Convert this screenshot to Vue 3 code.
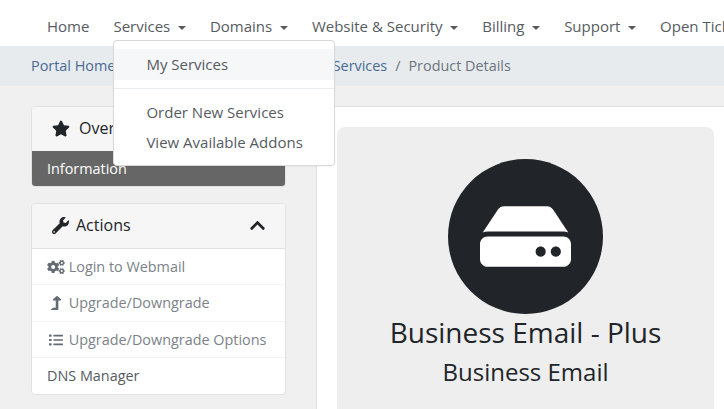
<script setup>
const 菜单 = [
  { 名称: 'Home', 下拉: false },
  { 名称: 'Services', 下拉: true },
  { 名称: 'Domains', 下拉: true },
  { 名称: 'Website & Security', 下拉: true },
  { 名称: 'Billing', 下拉: true },
  { 名称: 'Support', 下拉: true },
  { 名称: 'Open Ticket', 下拉: false }
]
</script>

<template>
  <div class="page">
    <!-- 顶部导航 -->
    <nav class="navbar">
      <a v-for="项 in 菜单" :key="项.名称" class="nav-item">
        {{ 项.名称 }}<span v-if="项.下拉" class="caret"></span>
        <div v-if="项.名称 === 'Services'" class="dropdown">
          <div class="dropdown-item active">My Services</div>
          <div class="divider"></div>
          <div class="dropdown-item">Order New Services</div>
          <div class="dropdown-item">View Available Addons</div>
        </div>
      </a>
    </nav>

    <!-- 面包屑 -->
    <div class="breadcrumb">
      <a>Portal Home</a><span class="sep">/</span>
      <a>Client Area</a><span class="sep">/</span>
      <a>My Products &amp; Services</a><span class="sep">/</span>
      <span class="current">Product Details</span>
    </div>

    <div class="content">
      <aside class="sidebar">
        <div class="card">
          <div class="card-header">
            <svg class="head-icon star" viewBox="0 0 576 512"><path d="M259.3 17.8L194 150.2 47.9 171.5c-26.2 3.8-36.7 36.1-17.7 54.6l105.7 103-25 145.5c-4.5 26.3 23.2 46 46.4 33.7L288 439.6l130.7 68.7c23.2 12.2 50.9-7.4 46.4-33.7l-25-145.5 105.7-103c19-18.5 8.5-50.8-17.7-54.6L382 150.2 316.7 17.8c-11.7-23.6-45.6-23.9-57.4 0z"/></svg>
            <span>Overview</span>
          </div>
          <div class="info-row">Information</div>
        </div>

        <div class="card">
          <div class="card-header">
            <svg class="head-icon" viewBox="0 0 512 512"><path d="M507.73 109.1c-2.24-9.03-13.54-12.09-20.12-5.51l-74.36 74.36-67.88-11.31-11.31-67.88 74.36-74.36c6.62-6.62 3.43-17.9-5.66-20.16-47.38-11.74-99.55.91-136.58 37.93-39.64 39.64-50.55 97.1-34.05 147.2L18.74 402.76c-24.99 24.99-24.99 65.51 0 90.5 24.99 24.99 65.51 24.99 90.5 0l213.21-213.21c50.12 16.71 107.47 5.68 147.37-34.22 37.07-37.07 49.7-89.32 37.91-136.73zM64 472c-13.25 0-24-10.75-24-24 0-13.26 10.75-24 24-24s24 10.74 24 24c0 13.25-10.75 24-24 24z"/></svg>
            <span>Actions</span>
            <svg class="chevron" viewBox="0 0 448 512"><path d="M240.971 130.524l194.343 194.343c9.373 9.373 9.373 24.569 0 33.941l-22.667 22.667c-9.357 9.357-24.522 9.375-33.901.04L224 227.495 69.255 381.516c-9.379 9.335-24.544 9.317-33.901-.04l-22.667-22.667c-9.373-9.373-9.373-24.569 0-33.941L207.03 130.525c9.372-9.373 24.568-9.373 33.941-.001z"/></svg>
          </div>
          <div class="action muted">
            <svg class="row-icon" viewBox="0 0 640 512"><path d="M512.1 191l-8.2 14.3c-3 5.3-9.4 7.5-15.1 5.4-11.8-4.4-22.6-10.7-32.1-18.6-4.6-3.8-5.8-10.5-2.8-15.7l8.2-14.3c-6.9-8-12.3-17.3-15.9-27.4h-16.5c-6 0-11.2-4.3-12.2-10.3-2-12-2.1-24.6 0-37.1 1-6 6.2-10.4 12.2-10.4h16.5c3.6-10.1 9-19.4 15.9-27.4l-8.2-14.3c-3-5.2-1.9-11.9 2.8-15.7 9.5-7.9 20.4-14.2 32.1-18.6 5.7-2.1 12.1.1 15.1 5.4l8.2 14.3c10.5-1.9 21.2-1.9 31.7 0L552 6.3c3-5.3 9.4-7.5 15.1-5.4 11.8 4.4 22.6 10.7 32.1 18.6 4.6 3.8 5.8 10.5 2.8 15.7l-8.2 14.3c6.9 8 12.3 17.3 15.9 27.4h16.5c6 0 11.2 4.3 12.2 10.3 2 12 2.1 24.6 0 37.1-1 6-6.2 10.4-12.2 10.4h-16.5c-3.6 10.1-9 19.4-15.9 27.4l8.2 14.3c3 5.2 1.9 11.9-2.8 15.7-9.5 7.9-20.4 14.2-32.1 18.6-5.7 2.1-12.1-.1-15.1-5.4l-8.2-14.3c-10.4 1.9-21.2 1.9-31.7 0zm-10.5-58.8c38.5 29.6 82.4-14.3 52.8-52.8-38.5-29.7-82.4 14.3-52.8 52.8zM386.3 286.1l33.7 16.8c10.1 5.8 14.5 18.1 10.5 29.1-8.9 24.2-26.4 46.4-42.6 65.8-7.4 8.9-20.2 11.1-30.3 5.3l-29.1-16.8c-16 13.7-34.6 24.6-54.9 31.7v33.6c0 11.6-8.3 21.6-19.7 23.6-24.6 4.2-50.4 4.4-75.9 0-11.5-2-20-11.9-20-23.6V418c-20.3-7.2-38.9-18-54.9-31.7L74 403c-10 5.8-22.9 3.6-30.3-5.3-16.2-19.4-33.3-41.6-42.2-65.7-4-10.9.4-23.2 10.5-29.1l33.3-16.8c-3.9-20.9-3.9-42.4 0-63.4L12 205.8c-10.1-5.8-14.6-18.1-10.5-29 8.9-24.2 26-46.4 42.2-65.8 7.4-8.9 20.2-11.1 30.3-5.3l29.1 16.8c16-13.7 34.6-24.6 54.9-31.7V57.1c0-11.5 8.2-21.5 19.6-23.5 24.6-4.2 50.5-4.4 76-.1 11.5 2 20 11.9 20 23.6v33.6c20.3 7.2 38.9 18 54.9 31.7l29.1-16.8c10-5.8 22.9-3.6 30.3 5.3 16.2 19.4 33.2 41.6 42.1 65.8 4 10.9.1 23.2-10 29.1l-33.7 16.8c3.9 21 3.9 42.5 0 63.5zm-117.6 21.1c59.2-77-28.7-164.9-105.7-105.7-59.2 77 28.7 164.9 105.7 105.7zm243.4 182.7l-8.2 14.3c-3 5.3-9.4 7.5-15.1 5.4-11.8-4.4-22.6-10.7-32.1-18.6-4.6-3.8-5.8-10.5-2.8-15.7l8.2-14.3c-6.9-8-12.3-17.3-15.9-27.4h-16.5c-6 0-11.2-4.3-12.2-10.3-2-12-2.1-24.6 0-37.1 1-6 6.2-10.4 12.2-10.4h16.5c3.6-10.1 9-19.4 15.9-27.4l-8.2-14.3c-3-5.2-1.9-11.9 2.8-15.7 9.5-7.9 20.4-14.2 32.1-18.6 5.7-2.1 12.1.1 15.1 5.4l8.2 14.3c10.5-1.9 21.2-1.9 31.7 0l8.2-14.3c3-5.3 9.4-7.5 15.1-5.4 11.8 4.4 22.6 10.7 32.1 18.6 4.6 3.8 5.8 10.5 2.8 15.7l-8.2 14.3c6.9 8 12.3 17.3 15.9 27.4h16.5c6 0 11.2 4.3 12.2 10.3 2 12 2.1 24.6 0 37.1-1 6-6.2 10.4-12.2 10.4h-16.5c-3.6 10.1-9 19.4-15.9 27.4l8.2 14.3c3 5.2 1.9 11.9-2.8 15.7-9.5 7.9-20.4 14.2-32.1 18.6-5.7 2.1-12.1-.1-15.1-5.4l-8.2-14.3c-10.4 1.9-21.2 1.9-31.7 0zM501.6 431c38.5 29.6 82.4-14.3 52.8-52.8-38.5-29.6-82.4 14.3-52.8 52.8z"/></svg>
            Login to Webmail
          </div>
          <div class="action muted">
            <svg class="row-icon wide" viewBox="0 0 320 512"><path d="M313.553 119.669L209.587 7.666c-9.485-10.214-25.676-10.229-35.174 0L70.438 119.669C56.232 134.969 67.062 160 88.025 160H152v272H68.024a11.996 11.996 0 0 0-8.485 3.515l-56 56C-4.021 499.074 1.333 512 12.024 512H208c13.255 0 24-10.745 24-24V160h63.966c20.878 0 31.851-24.969 17.587-40.331z"/></svg>
            Upgrade/Downgrade
          </div>
          <div class="action muted">
            <svg class="row-icon" viewBox="0 0 512 512"><rect x="0" y="56" width="96" height="80" rx="16"/><rect x="0" y="216" width="96" height="80" rx="16"/><rect x="0" y="376" width="96" height="80" rx="16"/><rect x="160" y="68" width="352" height="56" rx="14"/><rect x="160" y="228" width="352" height="56" rx="14"/><rect x="160" y="388" width="352" height="56" rx="14"/></svg>
            Upgrade/Downgrade Options
          </div>
          <div class="action">DNS Manager</div>
        </div>
      </aside>

      <main class="main">
        <div class="product">
          <div class="circle">
            <svg class="hdd" viewBox="0 0 576 512"><path d="M576 304v96c0 26.51-21.49 48-48 48H48c-26.51 0-48-21.49-48-48v-96c0-26.51 21.49-48 48-48h480c26.51 0 48 21.49 48 48zm-48-80a79.557 79.557 0 0 1 30.777 6.165L462.25 85.374A48.003 48.003 0 0 0 422.311 64H153.689a48 48 0 0 0-39.938 21.374L17.223 230.165A79.557 79.557 0 0 1 48 224h480zm-48 96c-17.673 0-32 14.327-32 32s14.327 32 32 32 32-14.327 32-32-14.327-32-32-32zm-96 0c-17.673 0-32 14.327-32 32s14.327 32 32 32 32-14.327 32-32-14.327-32-32-32z"/></svg>
          </div>
          <h3 class="title">Business Email - Plus</h3>
          <h4 class="subtitle">Business Email</h4>
        </div>
      </main>
    </div>
  </div>
</template>

<style>
html, body {
  margin: 0;
  overflow: hidden;
}
</style>

<style scoped>
.page {
  width: 724px;
  height: 409px;
  overflow: hidden;
  background: #f0f0f0;
  font-family: "Open Sans", "Noto Sans", sans-serif;
  font-size: 14.4px;
  color: #212529;
}

.navbar {
  display: flex;
  height: 46px;
  box-sizing: border-box;
  padding: 6px 0 0 47px;
  gap: 24px;
  background: #fff;
  white-space: nowrap;
  align-items: center;
  font-size: 15px;
}

.nav-item {
  position: relative;
  color: #565b61;
}

.caret {
  display: inline-block;
  margin-left: 7.7px;
  vertical-align: 2px;
  border-top: 4.3px solid #565b61;
  border-left: 4.3px solid transparent;
  border-right: 4.3px solid transparent;
}

.dropdown {
  position: absolute;
  left: 0;
  top: 24px;
  width: 222px;
  height: 126px;
  padding-top: 8px;
  box-sizing: border-box;
  background: #fff;
  border: 1px solid #d9d9d9;
  border-radius: 4px;
  z-index: 5;
  box-shadow: 0 1px 2px rgba(0, 0, 0, 0.04);
}

.dropdown-item {
  height: 30px;
  line-height: 30px;
  padding-left: 32px;
  color: #565b61;
}

.dropdown-item.active {
  height: 31px;
  line-height: 31px;
  background: #f6f7f9;
}

.divider {
  height: 1px;
  margin: 8px 0;
  background: #e9ecef;
}

.breadcrumb {
  display: flex;
  align-items: center;
  height: 40px;
  box-sizing: border-box;
  padding: 0 0 1px 31px;
  background: #e7ebee;
  white-space: nowrap;
  color: #6c757d;
}

.breadcrumb a {
  color: #4a6a94;
}

.sep {
  padding: 0 8px;
  color: #6c757d;
}

.content {
  display: flex;
  padding-top: 20px;
}

.sidebar {
  width: 255px;
  margin: 0 30px 0 31px;
  flex: none;
  display: flex;
  flex-direction: column;
  gap: 16px;
}

.card {
  background: #fff;
  border: 1px solid #e2e2e2;
  border-radius: 4px;
  overflow: hidden;
  box-sizing: border-box;
}

.card-header {
  display: flex;
  align-items: center;
  height: 42px;
  padding: 0 20px 2px;
  background: #f6f6f6;
  font-size: 16px;
  border-bottom: 1px solid #e2e2e2;
}

.head-icon {
  width: 17px;
  height: 17px;
  margin-right: 7px;
  fill: #212529;
  flex: none;
}

.star {
  width: 18px;
  margin-right: 9px;
}

.chevron {
  width: 15px;
  height: 17px;
  margin-left: auto;
  fill: #212529;
}

.info-row {
  height: 35px;
  margin-top: -1px;
  line-height: 35px;
  padding-left: 15px;
  background: #666;
  color: #fff;
}

.action {
  height: 36.33px;
  box-sizing: border-box;
  line-height: 35px;
  padding-left: 15px;
  color: #565b61;
  border-bottom: 1px solid #f3f3f3;
}

.action:last-child {
  border-bottom: none;
}

.action.muted {
  color: #7b8289;
}

.row-icon {
  width: 18px;
  height: 14px;
  vertical-align: -2px;
  fill: #646b72;
}

.wide {
  transform: scaleX(1.2);
}

.main {
  flex: 1;
  min-width: 0;
  padding: 20px 10px 0 20px;
  height: 303px;
  background: #fff;
  border-left: 1px solid #e2e2e2;
  border-top: 1px solid #e2e2e2;
}

.product {
  display: flex;
  flex-direction: column;
  align-items: center;
  height: 400px;
  padding-top: 32px;
  box-sizing: border-box;
  background: #eee;
  border-radius: 8px;
}

.circle {
  display: flex;
  align-items: center;
  justify-content: center;
  flex: none;
  width: 155px;
  height: 155px;
  border-radius: 50%;
  background: #212529;
}

.hdd {
  width: 91px;
  height: 81px;
  fill: #fff;
}

.title {
  margin: 0;
  font-size: 28px;
  font-weight: 400;
  line-height: 36px;
}

.subtitle {
  margin: 7px 0 0;
  font-size: 24px;
  font-weight: 400;
  line-height: 30px;
}
</style>
